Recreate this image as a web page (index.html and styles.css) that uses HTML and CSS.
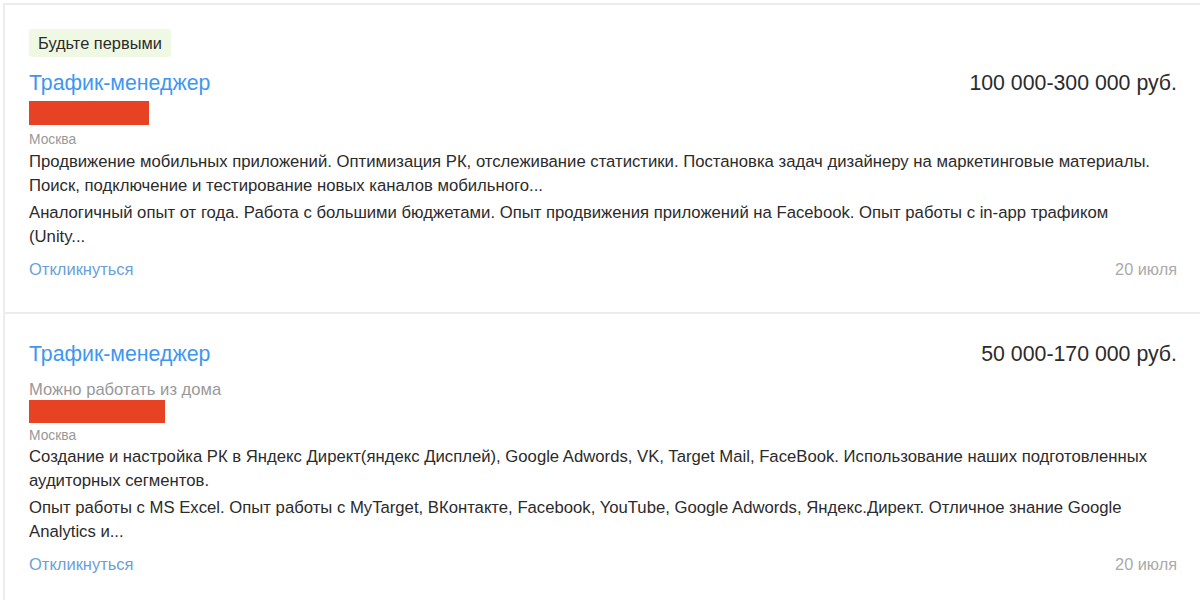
FILE: index.html
```html
<!DOCTYPE html>
<html lang="ru">
<head>
    <meta charset="UTF-8">
    <title>Вакансии</title>
    <link rel="stylesheet" href="styles.css">
</head>
<body>
    <div class="vacancy-list">
        <div class="vacancy">
            <div class="badge">Будьте первыми</div>
            <div class="vacancy-head">
                <a class="vacancy-title" href="#">Трафик-менеджер</a>
                <div class="salary">100 000-300 000 руб.</div>
            </div>
            <div class="company"></div>
            <div class="city">Москва</div>
            <div class="snippet">
                <p>Продвижение мобильных приложений. Оптимизация РК, отслеживание статистики. Постановка задач дизайнеру на маркетинговые материалы. Поиск, подключение и тестирование новых каналов мобильного...</p>
                <p>Аналогичный опыт от года. Работа с большими бюджетами. Опыт продвижения приложений на Facebook. Опыт работы с in-app трафиком<br>(Unity...</p>
            </div>
            <div class="vacancy-foot">
                <a class="respond" href="#">Откликнуться</a>
                <span class="date">20 июля</span>
            </div>
        </div>
        <div class="vacancy">
            <div class="vacancy-head">
                <a class="vacancy-title" href="#">Трафик-менеджер</a>
                <div class="salary">50 000-170 000 руб.</div>
            </div>
            <div class="remote">Можно работать из дома</div>
            <div class="company company-wide"></div>
            <div class="city">Москва</div>
            <div class="snippet">
                <p>Создание и настройка РК в Яндекс Директ(яндекс Дисплей), Google Adwords, VK, Target Mail, FaceBook. Использование наших подготовленных аудиторных сегментов.</p>
                <p>Опыт работы с MS Excel. Опыт работы с MyTarget, ВКонтакте, Facebook, YouTube, Google Adwords, Яндекс.Директ. Отличное знание Google Analytics и...</p>
            </div>
            <div class="vacancy-foot">
                <a class="respond" href="#">Откликнуться</a>
                <span class="date">20 июля</span>
            </div>
        </div>
    </div>
</body>
</html>
```

FILE: styles.css
```css
body {
    font-family: "Liberation Sans", Arial, sans-serif;
    margin: 0;
    padding: 0;
    background-color: #fff;
    color: #2b2b2b;
}

.vacancy-list {
    margin: 3px 0 0 3px;
    border-left: 2px solid #ececec;
    border-top: 2px solid #ececec;
    width: 1195px;
}

.vacancy {
    padding: 28px 23px 31px 24px;
    border-bottom: 2px solid #ececec;
}

.badge {
    display: inline-block;
    margin-top: -4px;
    margin-bottom: 14px;
    padding: 0 9px;
    height: 28px;
    line-height: 28px;
    font-size: 16.4px;
    color: #2b2b2b;
    background-color: #eef8e3;
    border-radius: 3px;
}

.vacancy-head {
    display: flex;
    justify-content: space-between;
    align-items: baseline;
    line-height: 25px;
}

.vacancy-title {
    font-size: 21.3px;
    color: #3e96f2;
    text-decoration: none;
}

.salary {
    font-size: 21.3px;
    color: #2b2b2b;
}

.remote {
    margin-top: 12px;
    font-size: 16.6px;
    line-height: 21px;
    color: #999;
}

.company {
    width: 120px;
    height: 24px;
    margin-top: 5px;
    background-color: #e84224;
}

.remote + .company {
    margin-top: 0;
    height: 23px;
}

.company-wide {
    width: 136px;
}

.city {
    margin-top: 6px;
    font-size: 13.8px;
    line-height: 17px;
    color: #999;
}

.remote ~ .city {
    margin-top: 4px;
}

.remote ~ .snippet {
    margin-top: 1px;
}

.snippet {
    margin-top: 2px;
    font-size: 16.7px;
    line-height: 24px;
}

.snippet p {
    margin: 0 0 3px 0;
}

.snippet p:last-child {
    margin-bottom: 0;
}

.vacancy-foot {
    display: flex;
    justify-content: space-between;
    margin-top: 8px;
    line-height: 24px;
}

.respond {
    font-size: 16.5px;
    color: #6a9fd8;
    text-decoration: none;
}

.date {
    font-size: 16.3px;
    color: #aaa;
}
```
